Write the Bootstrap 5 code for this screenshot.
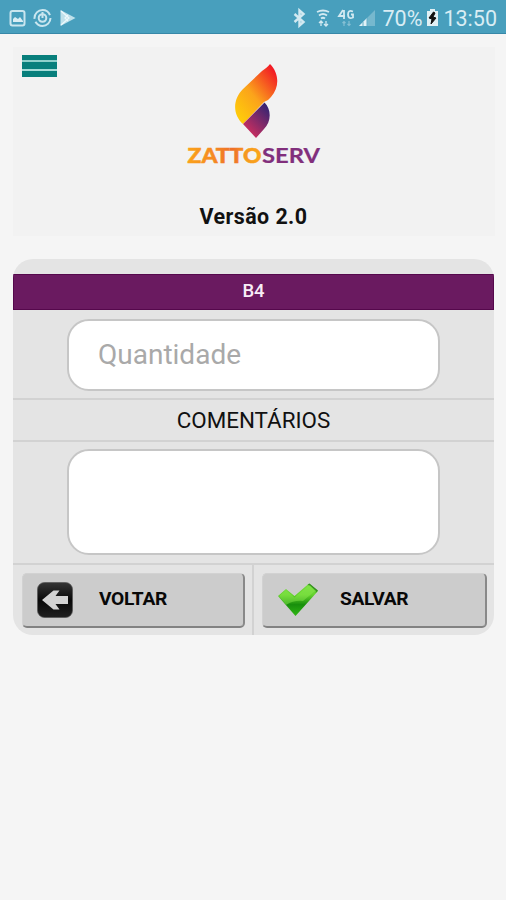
<!DOCTYPE html>
<html lang="pt-BR">
<head>
<meta charset="utf-8">
<meta name="viewport" content="width=device-width, initial-scale=1">
<title>ZattoServ</title>
<link href="https://cdn.jsdelivr.net/npm/bootstrap@5.3.0/dist/css/bootstrap.min.css" rel="stylesheet">
<style>
body{background:#f5f5f5;font-family:Roboto,"Liberation Sans",sans-serif;color:#111;min-height:900px;overflow:hidden}
svg{display:block;flex:none}
.statusbar{height:34px;background:#489fbd;border-bottom:1px solid #3788a8;color:#d9edf4;font-size:21.5px;line-height:32px;padding:3px 9px 0 8px}
.app-head{margin:13px 11px 0 13px;height:189px;background:#f2f2f2;padding:8px 9px 0}
.menu-btn{width:35px;height:22px;padding:0;border:0;border-radius:0;background:linear-gradient(#087f7c 0 5px,#8fd0cb 5px 7px,#087f7c 7px 14px,#a5dcd8 14px 16px,#087f7c 16px)}
.brand-block{margin-top:-14px;margin-right:2px}
.version{font-size:21.4px;line-height:26px;font-weight:700;margin-top:37px;letter-spacing:.45px;padding-left:1px}
.form-panel{margin:23px 12px 0 13px;width:481px;height:376px;background:#e4e4e4;border-radius:20px;overflow:hidden;padding-top:15px}
.panel-title{height:36px;background:#6a1a60;border:1px solid #55084c;color:#f8edf7;font-size:18.5px;line-height:33px;font-weight:500}
.field-row{border-bottom:2px solid #d2d2d2}
.qty-row{padding-top:9px;height:90px}
.notes-row{padding-top:7px;height:123px}
.soft-field,.soft-field:focus{width:373px;border:2px solid #c6c6c6;border-radius:22px;background:#fff;box-shadow:none;resize:none;font-size:28px;padding:0 29px 2px}
.soft-field::placeholder{color:#a9a9a9;opacity:1}
.qty{height:72px}
.notes,.notes:focus{height:106px;min-height:106px}
.comments-label{height:42px;line-height:41px;font-size:22.4px}
.actions-row{height:70px}
.cell{padding:8px 7px 0 9px;width:239px}
.cell+.cell{width:242px;border-left:2px solid #d2d2d2;padding:8px 7px 0 8px}
.action,.action:hover,.action:active{height:55px;background:#ccc!important;border-width:1px 2px 2px 1px;border-style:solid;border-color:#d2d2d2 #898989 #828282 #d2d2d2!important;border-radius:5px;padding:0 0 1px 14px;font-size:19.2px;letter-spacing:-.35px;font-weight:700;line-height:50px;color:#080808!important}
.back-text,.save-text{padding-bottom:2px}
.back-text{margin-left:26px}
.save-text{margin-left:21px}
</style>
</head>
<body>
<div class="statusbar d-flex justify-content-between">
  <div class="d-flex">
    <svg width="70" height="30" viewBox="0 0 70 30" fill="none" stroke="#cae6ef" stroke-width="2">
      <rect x="2.500" y="8" width="14" height="14.500" rx="2"/><path d="M5 19v-3l2-2 3 2 2-2 3 4v1z" fill="#d9edf4" stroke="none"/>
      <circle cx="34.500" cy="15" r="8" stroke-dasharray="21 3 23 3"/><circle cx="34.500" cy="15" r="3.800"/><path d="M34.500 9v6"/>
      <path d="M52.500 7v16l15-8z" fill="#bfe1eb" stroke="none"/><path d="M53 8l8 7-8 7M60 12l-3 3 3 3" stroke="#eef9fc" stroke-width="1.200"/>
    </svg>
  </div>
  <div class="d-flex">
    <svg width="90" height="30" viewBox="0 0 90 30" fill="none" stroke="#d2e9f1" stroke-width="2">
      <path d="M1.500 11l9 8-4 3.500v-15l4 3.500-9 8" stroke-width="2.400"/>
      <path d="M24 9q6-3 12 0M26 12.500q4-3 8 0M28 15.500q2-1.500 4 0" stroke-width="1.800"/><path d="M28 23v-5m-2 2l2-2 2 2M33 18v5m-2-2l2 2 2-2" stroke-width="1.300"/>
      <path d="M50 7l-4 6h6M51 7v9M60 8.500q-5-2-5 3t5 3v-3h-2" stroke-width="1.800"/><path d="M51 23v-4m-1.500 1l1.500-1.500 1.500 1.500M56 18v4m-1.500-1l1.500 1.500 1.500-1.500" stroke="#86c0d4" stroke-width="1.200"/>
      <path d="M66 23L82 7v16z" fill="#76b8ce" stroke="none"/><path d="M66 23l8-8v8z" fill="#e2f2f7" stroke="none"/><path d="M70 19v4M74 15v8" stroke="#62adc7" stroke-width="1"/>
    </svg>
    <span class="text-nowrap">70%</span>
    <svg width="13" height="30" viewBox="0 0 13 30" class="ms-1 me-1"><path d="M4 6h5v2h3v15H1V8h3z" fill="#e0f0f5"/><path d="M7.500 9L3 15l3 1-1 5 5-6-3-1 2-4z" fill="#111" stroke="#111"/></svg>
    <span>13:50</span>
  </div>
</div>

<header class="app-head">
  <button class="menu-btn d-block" type="button" aria-label="Menu"></button>
  <div class="brand-block d-flex flex-column align-items-center">
    <svg width="142" height="104" viewBox="182 63 142 104">
      <defs>
        <linearGradient id="flame" gradientUnits="userSpaceOnUse" x1="235" y1="113" x2="279" y2="77"><stop stop-color="#ffcb0a"/><stop offset=".45" stop-color="#fba31b"/><stop offset="1" stop-color="#f21c25"/></linearGradient>
        <linearGradient id="ember" gradientUnits="userSpaceOnUse" x1="247" y1="130" x2="269" y2="108"><stop stop-color="#c72e60"/><stop offset="1" stop-color="#352472"/></linearGradient>
        <linearGradient id="word" gradientUnits="userSpaceOnUse" x1="187" y1="0" x2="261" y2="0"><stop stop-color="#fba31a"/><stop offset=".35" stop-color="#f58a22"/><stop offset=".62" stop-color="#ee7029"/><stop offset=".8" stop-color="#f69a1f"/><stop offset="1" stop-color="#faa51a"/></linearGradient>
      </defs>
      <path d="M270 64C279 73 280 87 271 97Q268 101 264 102L243 124C232 114 233 99 243 89L262 71Q268 67 270 64z" fill="url(#flame)"/>
      <path d="M264.500 102.500C272 110 271 122 264 129L256 138L243 124z" fill="url(#ember)"/>
      <text x="187.500" y="163" font-family="Lato,sans-serif" font-weight="900" font-size="20.500" textLength="74" lengthAdjust="spacingAndGlyphs" fill="url(#word)" stroke="url(#word)" stroke-width=".5">ZATTO</text>
      <text x="262" y="163" font-family="Lato,sans-serif" font-weight="700" font-size="20.500" textLength="58" lengthAdjust="spacingAndGlyphs" fill="#812f7c" stroke="#812f7c" stroke-width=".2">SERV</text>
    </svg>
    <div class="version">Versão 2.0</div>
  </div>
</header>

<main class="form-panel">
  <div class="panel-title text-center">B4</div>
  <div class="field-row qty-row d-flex justify-content-center">
    <input class="form-control soft-field qty" type="text" placeholder="Quantidade" aria-label="Quantidade">
  </div>
  <div class="field-row comments-label text-center">COMENTÁRIOS</div>
  <div class="field-row notes-row d-flex justify-content-center">
    <textarea class="form-control soft-field notes" aria-label="Comentários"></textarea>
  </div>
  <div class="actions-row d-flex">
    <div class="cell">
      <button class="btn action w-100 d-flex align-items-center" type="button">
        <svg width="36" height="37" viewBox="0 0 36 37"><defs><linearGradient id="tile" x2="0" y2="1"><stop stop-color="#353535"/><stop offset=".5" stop-color="#090909"/><stop offset="1" stop-color="#202020"/></linearGradient></defs><rect x=".5" y="1.500" width="35" height="35" rx="7" fill="url(#tile)" stroke="#555" stroke-width=".7"/><path d="M5 19L16.500 9.500h6L18.500 15h12.500v8H18.500l4 5.500h-6z" fill="#d2d2d2"/></svg>
        <span class="back-text">VOLTAR</span>
      </button>
    </div>
    <div class="cell">
      <button class="btn action w-100 d-flex align-items-center" type="button">
        <svg width="42" height="37" viewBox="0 0 42 37"><defs><linearGradient id="check" x2="0" y2="1"><stop stop-color="#78df42"/><stop offset=".35" stop-color="#65d22d"/><stop offset=".65" stop-color="#188f0c"/><stop offset="1" stop-color="#30b714"/></linearGradient></defs><path d="M1 15L9 8l8.500 7L32 2.500l9 7.500-22.500 25z" fill="url(#check)"/><path d="M2 15l7-6 8.500 7.500L32 4l6 6-12 10q-9-1-17 4z" fill="#8fec52" opacity=".45"/><path d="M30.500 4l2-1.500 8.500 7-2.500 2.500.5-2-6-5.500z" fill="#359021"/></svg>
        <span class="save-text">SALVAR</span>
      </button>
    </div>
  </div>
</main>
<script src="https://cdn.jsdelivr.net/npm/bootstrap@5.3.0/dist/js/bootstrap.bundle.min.js"></script>
</body>
</html>
